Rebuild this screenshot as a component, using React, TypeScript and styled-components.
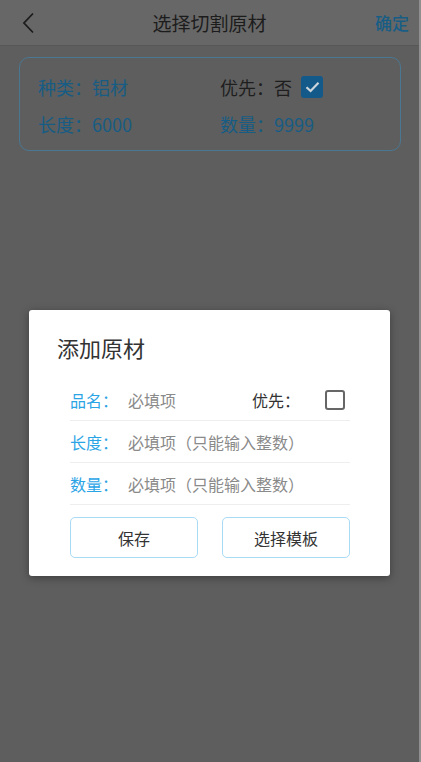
import styled, { createGlobalStyle } from "styled-components";

const GlobalStyle = createGlobalStyle`
  html, body {
    margin: 0;
    padding: 0;
    background: #8f8f8f;
  }
  body {
    font-family: "Noto Sans CJK SC", "Noto Sans", sans-serif;
  }
`;

const Screen = styled.div`
  position: relative;
  width: 419px;
  height: 762px;
  background: #5e5e5e;
  overflow: hidden;
`;

const Header = styled.header`
  height: 45px;
  display: grid;
  grid-template-columns: 60px 1fr 60px;
  align-items: center;
  background: #676767;
  border-bottom: 1px solid #585858;
`;

const BackButton = styled.div`
  display: flex;
  align-items: center;
  padding-left: 21px;
`;

const HeaderTitle = styled.h1`
  margin: 0;
  text-align: center;
  font-size: 19px;
  font-weight: 400;
  color: #1c1c1c;
`;

const HeaderAction = styled.div`
  text-align: right;
  padding-right: 10px;
  font-size: 17px;
  font-weight: 500;
  color: #175d85;
`;

const InfoCard = styled.div`
  margin: 11px 18px 0 19px;
  height: 94px;
  box-sizing: border-box;
  border: 1px solid #4a7892;
  border-radius: 10px;
  padding: 10px 18px 0;
  display: grid;
  grid-template-columns: 182px 1fr;
  grid-auto-rows: 37px;
`;

const InfoItem = styled.div<{ $tone?: "blue" | "dark" }>`
  display: flex;
  align-items: center;
  gap: 6px;
  font-size: 18px;
  line-height: 26px;
  color: ${(p) => (p.$tone === "dark" ? "#1e1e1e" : "#165c84")};
`;

const CardCheck = styled.span`
  width: 22px;
  height: 22px;
  border-radius: 3px;
  background: #13598a;
  display: inline-flex;
  align-items: center;
  justify-content: center;
  margin-left: 3px;
`;

const Backdrop = styled.div`
  position: absolute;
  inset: 0;
  display: flex;
  justify-content: center;
  align-items: flex-start;
  padding-top: 310px;
  box-sizing: border-box;
`;

const Dialog = styled.div`
  width: 361px;
  background: #ffffff;
  border-radius: 3px;
  box-shadow: 0 2px 8px rgba(0, 0, 0, 0.35);
  padding: 22px 0 18px;
  box-sizing: border-box;
`;

const DialogTitle = styled.h2`
  margin: 0 0 17px 28px;
  font-size: 22px;
  line-height: 30px;
  font-weight: 400;
  color: #333333;
`;

const Form = styled.div`
  margin: 0 40px 0 41px;
`;

const FormRow = styled.div`
  height: 42px;
  box-sizing: border-box;
  border-bottom: 1px solid #eeeeee;
  display: flex;
  align-items: center;
  font-size: 16px;
`;

const Label = styled.span`
  width: 58px;
  color: #2ba4e6;
  flex-shrink: 0;
`;

const Placeholder = styled.span`
  flex: 1;
  color: #8a8a8a;
`;

const SideLabel = styled.span`
  color: #333333;
  margin-right: 25px;
`;

const CheckBox = styled.span`
  width: 20px;
  height: 20px;
  box-sizing: border-box;
  border: 2px solid #666666;
  border-radius: 3px;
  margin-right: 5px;
`;

const Actions = styled.div`
  display: flex;
  gap: 24px;
  margin-top: 12px;
`;

const Button = styled.button`
  flex: 1;
  height: 41px;
  background: #ffffff;
  border: 1px solid #a9dbf4;
  border-radius: 5px;
  font-family: inherit;
  font-size: 16px;
  color: #333333;
  padding: 0;
`;

export default function App() {
  return (
    <>
      <GlobalStyle />
      <Screen>
        <Header>
          <BackButton>
            <svg width="14" height="22" viewBox="0 0 14 22" fill="none">
              <path d="M12 1.5 L3 11 L12 20.5" stroke="#1c1c1c" strokeWidth="1.8" />
            </svg>
          </BackButton>
          <HeaderTitle>选择切割原材</HeaderTitle>
          <HeaderAction>确定</HeaderAction>
        </Header>

        <InfoCard>
          <InfoItem>种类：铝材</InfoItem>
          <InfoItem $tone="dark">
            优先：否
            <CardCheck>
              <svg width="15" height="12" viewBox="0 0 15 12" fill="none">
                <path d="M1.5 6.2 L5.6 10 L13.5 1.8" stroke="#cdd6dc" strokeWidth="2.2" />
              </svg>
            </CardCheck>
          </InfoItem>
          <InfoItem>长度：6000</InfoItem>
          <InfoItem>数量：9999</InfoItem>
        </InfoCard>

        <Backdrop>
          <Dialog>
            <DialogTitle>添加原材</DialogTitle>
            <Form>
              <FormRow>
                <Label>品名：</Label>
                <Placeholder>必填项</Placeholder>
                <SideLabel>优先：</SideLabel>
                <CheckBox />
              </FormRow>
              <FormRow>
                <Label>长度：</Label>
                <Placeholder>必填项（只能输入整数）</Placeholder>
              </FormRow>
              <FormRow>
                <Label>数量：</Label>
                <Placeholder>必填项（只能输入整数）</Placeholder>
              </FormRow>
              <Actions>
                <Button>保存</Button>
                <Button>选择模板</Button>
              </Actions>
            </Form>
          </Dialog>
        </Backdrop>
      </Screen>
    </>
  );
}
